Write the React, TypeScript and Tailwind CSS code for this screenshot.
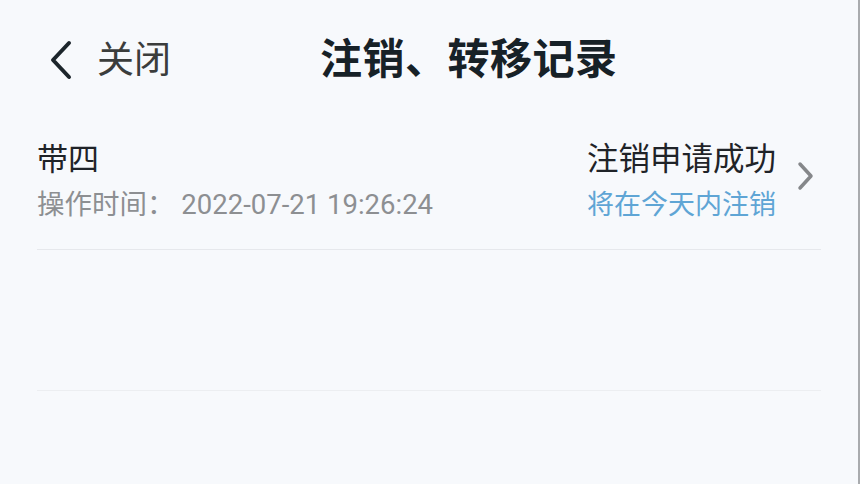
const font = { fontFamily: 'Roboto, "Noto Sans CJK SC", sans-serif' };

export default function App() {
  return (
    <div
      className="flex h-[484px] w-[860px] flex-col overflow-hidden border-r-2 border-[#a9abae] bg-[#f7f9fc]"
      style={font}
    >
      {/* header */}
      <div className="flex h-[120px] items-center">
        <div className="flex w-[320px] items-center pl-[48px]">
          <svg width="26" height="40" viewBox="0 0 26 40" className="text-[#1c252b]">
            <path d="M21 3 L5 20 L21 37" fill="none" stroke="currentColor" strokeWidth="4" strokeLinecap="round" strokeLinejoin="round" />
          </svg>
          <span className="ml-[23px] text-[37px] leading-none text-[#3b3d3c]">关闭</span>
        </div>
        <h1 className="text-[42px] font-bold leading-none tracking-[0.5px] text-[#172127]">注销、转移记录</h1>
      </div>

      {/* record */}
      <div className="mx-[37px] flex h-[130px] items-start border-b border-[#e6e8ec] pt-[22px]">
        <div className="flex flex-1 flex-col">
          <span className="text-[31px] leading-[36px] text-[#1f2328]">带四</span>
          <span className="mt-[12px] text-[27.5px] leading-[30px] text-[#8d8f92]">
            操作时间：&nbsp;2022-07-21 19:26:24
          </span>
        </div>
        <div className="flex items-center">
          <div className="flex flex-col items-end">
            <span className="text-[31.5px] leading-[36px] text-[#1f2328]">注销申请成功</span>
            <span className="mt-[12px] text-[27px] leading-[30px] text-[#5fa5d5]">将在今天内注销</span>
          </div>
          <svg width="18" height="30" viewBox="0 0 18 30" className="ml-[21px] mr-[6px] mt-[-10px] text-[#85878a]">
            <path d="M3 3 L14 15 L3 27" fill="none" stroke="currentColor" strokeWidth="3.5" strokeLinecap="round" strokeLinejoin="round" />
          </svg>
        </div>
      </div>

      <div className="mx-[37px] h-[141px] border-b border-[#eceef1]" />
    </div>
  );
}
